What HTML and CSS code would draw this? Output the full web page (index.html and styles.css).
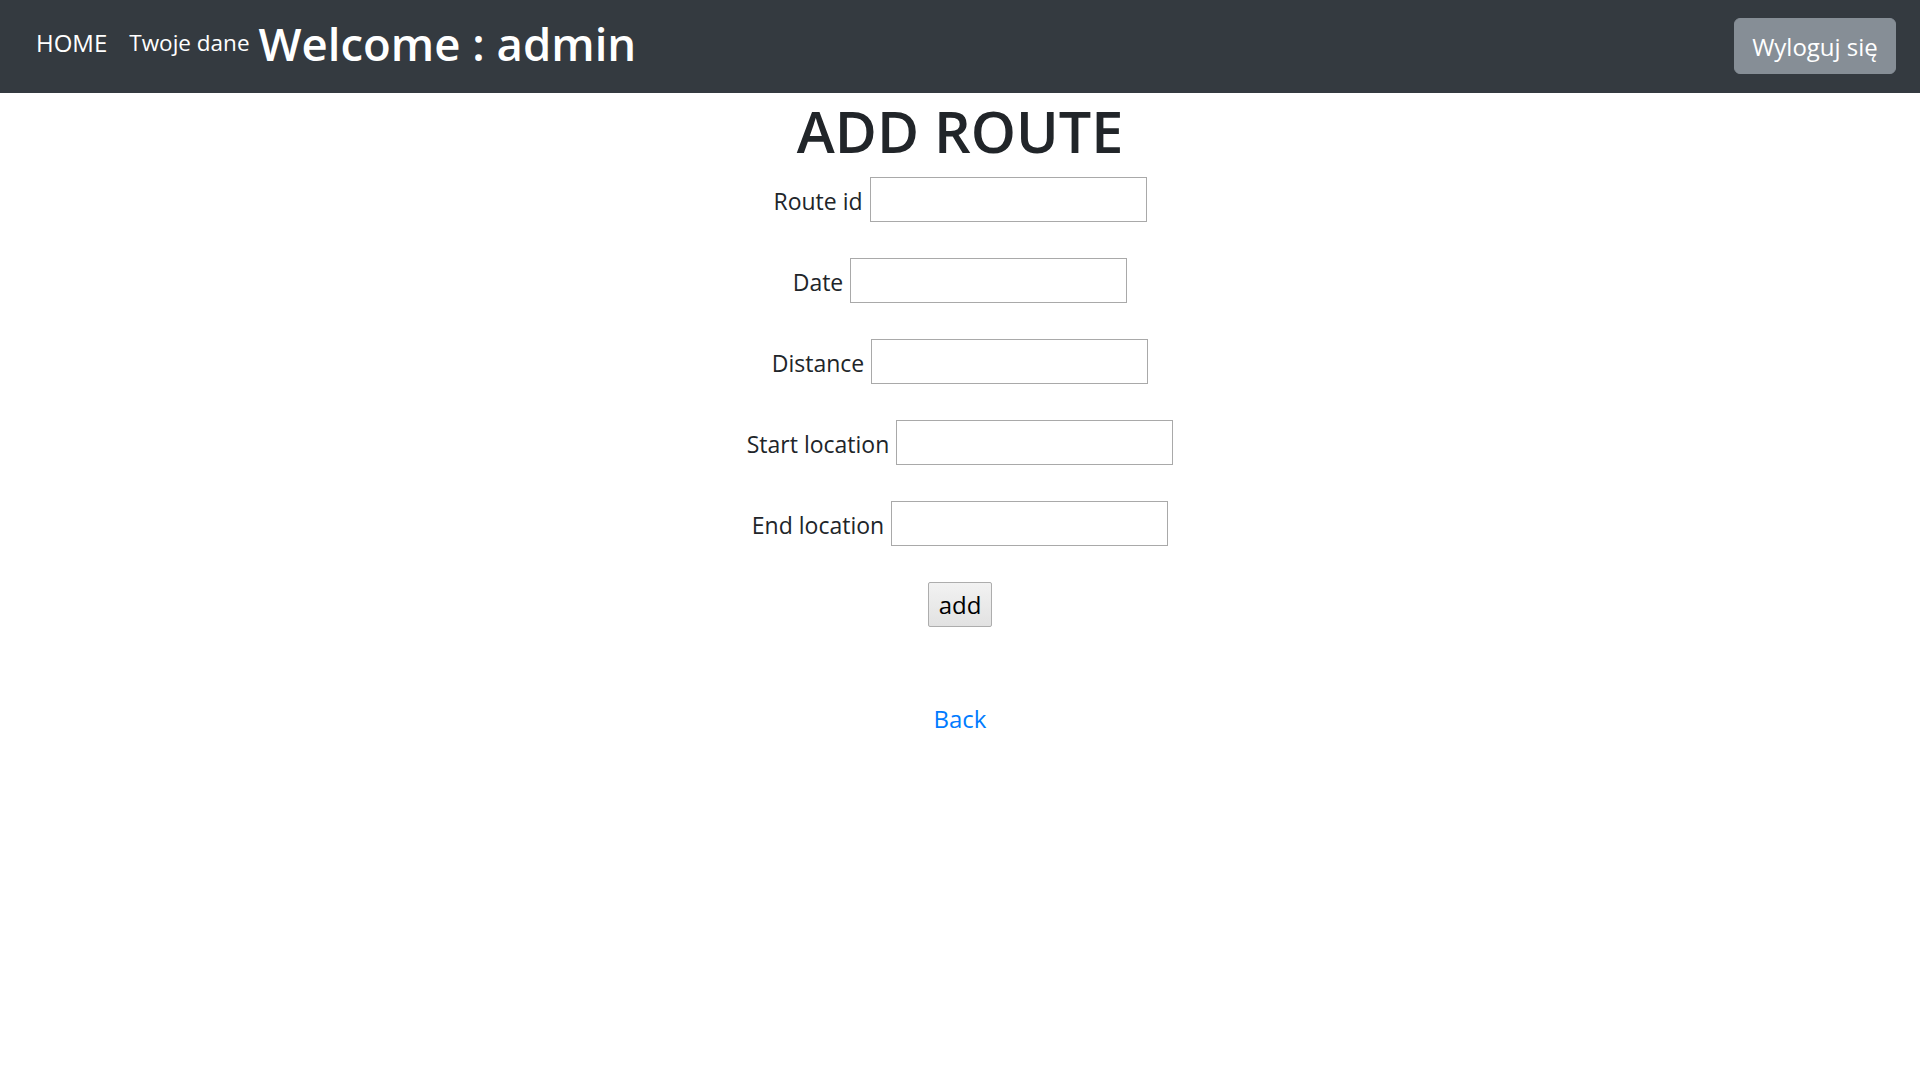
FILE: index.html
```html
<!DOCTYPE html>
<html lang="pl">
<head>
<meta charset="utf-8">
<title>Add route</title>
<link rel="stylesheet" href="styles.css">
</head>
<body>
<nav class="navbar">
  <a class="nav-link" href="#">HOME</a>
  <a class="nav-link" href="#">Twoje dane</a>
  <h2 class="welcome">Welcome : admin</h2>
  <button class="logout" type="button">Wyloguj się</button>
</nav>
<main class="content">
  <h1 class="title">ADD ROUTE</h1>
  <form class="route-form">
    <div class="row"><label class="label">Route id</label><input class="field" type="text"></div>
    <div class="row"><label class="label">Date</label><input class="field" type="text"></div>
    <div class="row"><label class="label">Distance</label><input class="field" type="text"></div>
    <div class="row"><label class="label">Start location</label><input class="field" type="text"></div>
    <div class="row"><label class="label">End location</label><input class="field" type="text"></div>
    <div class="row"><button class="add" type="button">add</button></div>
  </form>
  <a class="back" href="#">Back</a>
</main>
</body>
</html>
```
FILE: styles.css
```css
* { box-sizing: border-box; }
body {
  margin: 0;
  font-family: "Open Sans", "Noto Sans", sans-serif;
  color: #212529;
  background: #fff;
}
.navbar {
  display: flex;
  align-items: flex-start;
  height: 93px;
  background: #343a40;
  padding: 0 24px 0 36px;
}
.nav-link {
  color: #fff;
  text-decoration: none;
  font-size: 24px;
  line-height: 36px;
  margin-top: 25px;
  margin-right: 22px;
}
.nav-link + .nav-link {
  font-size: 22.5px;
  margin-right: 9px;
}
.welcome {
  margin: 0;
  color: #fff;
  font-size: 45.5px;
  font-weight: 600;
  line-height: 58px;
  margin-top: 14px;
}
.logout {
  margin-left: auto;
  margin-top: 18px;
  width: 162px;
  height: 56px;
  background: #868e96;
  border: 1px solid #868e96;
  border-radius: 6px;
  color: #fff;
  font-family: inherit;
  font-size: 24px;
  padding: 0;
}
.content {
  padding-top: 2px;
  text-align: center;
}
.title {
  margin: 0 0 10px;
  font-size: 57.5px;
  font-weight: 600;
  line-height: 72px;
}
.route-form {
  display: flex;
  flex-direction: column;
  gap: 36px;
}
.row {
  display: flex;
  justify-content: center;
  align-items: center;
  gap: 7px;
  height: 45px;
}
.label {
  font-size: 23px;
  line-height: 36px;
  padding-top: 2px;
}
.field {
  width: 277px;
  height: 45px;
  border: 1px solid #a9a9a9;
  border-radius: 0;
  margin: 0;
  font-size: 20px;
}
.add {
  width: 64px;
  height: 45px;
  padding: 0;
  border: 1px solid #adadad;
  border-radius: 2px;
  background: linear-gradient(#f2f2f2, #e2e2e2);
  color: #000;
  font-family: inherit;
  font-size: 24px;
}
.back {
  display: block;
  margin-top: 74px;
  color: #007bff;
  text-decoration: none;
  font-size: 24px;
  line-height: 36px;
}
```
